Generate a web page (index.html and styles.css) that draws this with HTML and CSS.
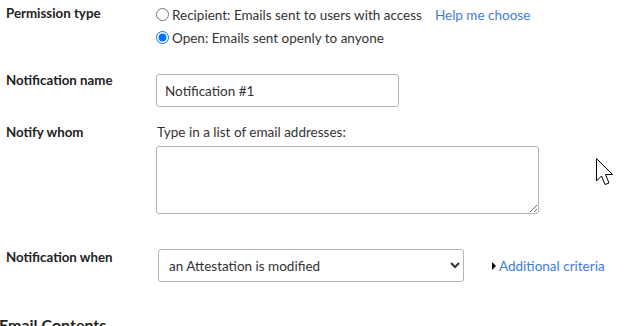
FILE: index.html
```html
<!DOCTYPE html>
<html lang="en">
<head>
  <meta charset="UTF-8" />
  <title>Notification</title>
  <link rel="stylesheet" href="styles.css">
</head>
<body>

<div class="form">
  <div class="row row-permission">
    <div class="label">Permission type</div>
    <div class="field">
      <label class="radio">
        <input type="radio" name="perm" />
        <span>Recipient: Emails sent to users with access</span>
        <a href="#" class="link help">Help me choose</a>
      </label>
      <label class="radio">
        <input type="radio" name="perm" checked />
        <span>Open: Emails sent openly to anyone</span>
      </label>
    </div>
  </div>

  <div class="row row-name">
    <div class="label">Notification name</div>
    <div class="field">
      <input type="text" class="text-input" value="Notification #1" />
    </div>
  </div>

  <div class="row row-whom">
    <div class="label">Notify whom</div>
    <div class="field">
      <p class="hint">Type in a list of email addresses:</p>
      <textarea class="emails"></textarea>
    </div>
  </div>

  <div class="row row-when">
    <div class="label">Notification when</div>
    <div class="field field-inline">
      <select class="when">
        <option>an Attestation is modified</option>
      </select>
      <a href="#" class="link criteria"><span class="caret"></span>Additional criteria</a>
    </div>
  </div>

  <h2 class="section">Email Contents</h2>
</div>

<svg class="pointer" width="20" height="30" viewBox="0 0 20 30">
  <path d="M1.5 1.5 L1.5 24 L6.5 19 L10 27.5 L14 26 L10.5 17.5 L17.5 17.5 Z" fill="#fff" stroke="#000" stroke-width="1" stroke-linejoin="miter" />
</svg>

</body>
</html>
```

FILE: styles.css
```css
* {
  box-sizing: border-box;
}

body {
  margin: 0;
  font-family: 'Lato', sans-serif;
  font-size: 13.5px;
  color: #333;
  background: #fff;
  position: relative;
  height: 326px;
  overflow: hidden;
}

.form {
  padding: 3px 0 0 6px;
}

.row {
  display: grid;
  grid-template-columns: 150px 1fr;
  line-height: 20px;
}

.label {
  font-weight: 700;
  font-size: 13.3px;
  color: #222;
}

.radio {
  display: flex;
  align-items: center;
  height: 23px;
}

.radio input {
  margin: 0 3px 0 0;
  width: 13px;
  height: 13px;
}

.link {
  color: #3f7bd8;
  text-decoration: none;
}

.help {
  margin-left: 13px;
}

.row-name {
  margin-top: 25px;
}

.row-name .label {
  margin-top: -4px;
}

.text-input {
  width: 243px;
  height: 33px;
  border: 1px solid #b4b4b4;
  border-radius: 3px;
  padding: 0 8px;
  font-family: 'Lato', sans-serif;
  font-size: 13.5px;
  color: #333;
}

.row-whom {
  margin-top: 15px;
}

.hint {
  margin: 0 0 4px 1px;
}

.emails {
  display: block;
  width: 383px;
  height: 68px;
  border: 1px solid #b4b4b4;
  border-radius: 3px;
  font-family: 'Lato', sans-serif;
  font-size: 13.5px;
}

.row-when {
  margin-top: 35px;
}

.row-when .label {
  margin-top: -2px;
}

.field-inline {
  display: flex;
  align-items: center;
}

.when {
  margin-left: 2px;
  width: 306px;
  height: 33px;
  border: 1px solid #b4b4b4;
  border-radius: 3px;
  padding: 0 6px;
  font-family: 'Lato', sans-serif;
  font-size: 13.5px;
  color: #333;
  background: #fff;
}

.criteria {
  margin-left: 28px;
  display: flex;
  align-items: center;
}

.caret {
  width: 0;
  height: 0;
  border-top: 4px solid transparent;
  border-bottom: 4px solid transparent;
  border-left: 4px solid #000;
  margin-right: 3px;
}

.section {
  margin: 33px 0 0 -7px;
  font-size: 16px;
  font-weight: 700;
  color: #222;
}

.pointer {
  position: absolute;
  left: 595px;
  top: 157px;
}
```
